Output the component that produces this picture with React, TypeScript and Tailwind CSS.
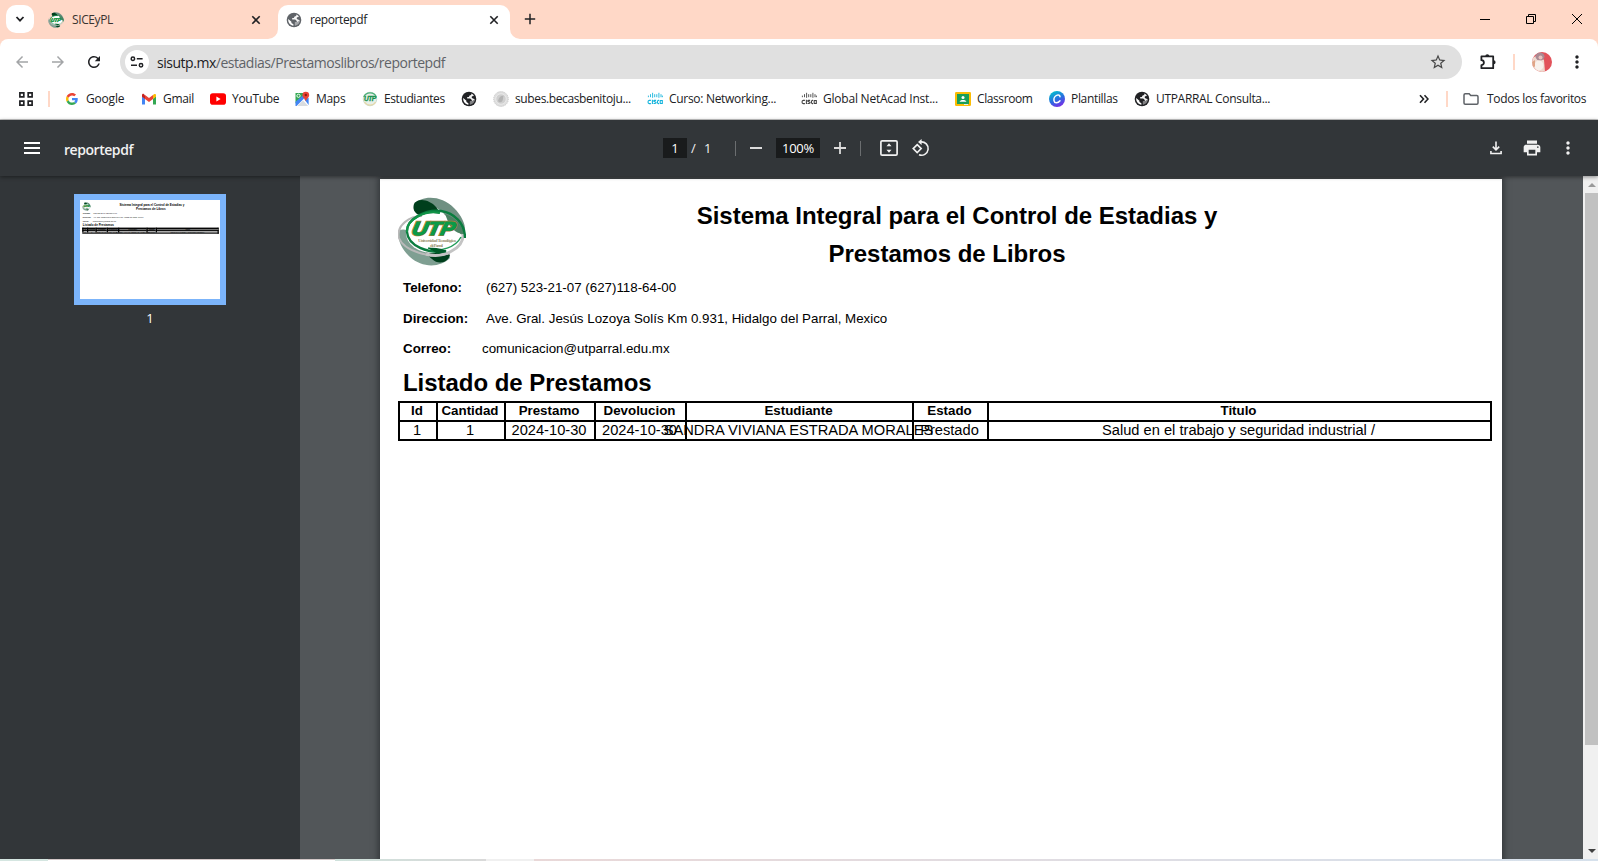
import React from "react";
import {
  MdArrowBack,
  MdArrowForward,
  MdRefresh,
  MdStarBorder,
  MdMoreVert,
  MdPrint,
} from "react-icons/md";

const UI = "font-['Open_Sans','Noto_Sans',sans-serif]";

function UtpLogo({ className, small = false }: { className?: string; small?: boolean }) {
  return (
    <svg viewBox="0 0 68 69" className={className}>
      <path d="M16 7 C24 -2 44 -2 56 11 C66 21 69 32 66 38 C58 36 52 32 50 25 C48 14 34 4 18 11 Z" fill="#6f9082" />
      <path d="M16 7 C20 0 32 3 38 10 C42 15 42 17 40 18 C32 19 24 19 19 17 C15 14 15 10 16 7 Z" fill="#003f1c" />
      <path d="M52 61 C42 71 24 71 12 60 C2 51 -1 40 1 33 C8 31 14 34 16 41 C20 54 34 62 50 56 Z" fill="#7f9f92" />
      <path d="M52 58 C50 66 40 68 34 62 C27 57 26 51 30 51 C38 53 46 54 50 56 Z" fill="#003f1c" />
      <ellipse cx="35" cy="36" rx="27" ry="20" fill="#fff" />
      <path d="M47 17 C58 20 65 30 66 37 C60 37 54 33 51 27 Z" fill="#4c8163" />
      <path d="M52 56 C34 63 6 54 1 41 C-2 28 12 19 24 19" fill="none" stroke="#b9b9b9" strokeWidth="2" />
      <path d="M28 57 C44 62 66 52 65 37" fill="none" stroke="#c4c4c4" strokeWidth="3" />
      <path d="M48 54 C30 57 10 49 9 35 C8 22 28 12 43 14 C56 16 67 26 67 41" fill="none" stroke="#0a7d3f" strokeWidth="2.4" />
      <path d="M9 35 C8 22 28 13 42 16" fill="none" stroke="#109548" strokeWidth="2" />
      <path d="M30 51 C42 56 58 50 63 40" fill="none" stroke="#1f9b57" strokeWidth="1.4" />
      <path d="M30 51 C38 50 44 52 49 54 L40 57 Z" fill="#005a28" />
      <g transform="skewX(-12)">
        <text
          x={small ? 19 : 21}
          y={small ? 42 : 38}
          fontSize={small ? 24 : 19}
          fontWeight="700"
          fontStyle="italic"
          fontFamily="Liberation Sans"
          textLength="43"
          lengthAdjust="spacingAndGlyphs"
          fill="#0a9a48"
          stroke="#b37a35"
          strokeWidth={small ? 1.2 : 2.2}
          paintOrder="stroke"
        >
          UTP
        </text>
        <text
          x={small ? 19 : 21}
          y={small ? 42 : 38}
          fontSize={small ? 24 : 19}
          fontWeight="700"
          fontStyle="italic"
          fontFamily="Liberation Sans"
          textLength="43"
          lengthAdjust="spacingAndGlyphs"
          fill="#0a9a48"
          stroke="#0a9a48"
          strokeWidth="0.9"
          aria-hidden="true"
        >
          UTP
        </text>
      </g>
      {!small && (
        <g fontFamily="Liberation Serif" fontSize="5" fontWeight="700" fill="#9c9473">
          <text x="20" y="45" textLength="38">
            Universidad Tecnológica
          </text>
          <text x="32" y="49.5" textLength="13">
            de Parral
          </text>
        </g>
      )}
    </svg>
  );
}

function Globe({ className }: { className?: string }) {
  return (
    <svg viewBox="0 0 16 16" className={className}>
      <circle cx="8" cy="8" r="7.3" fill="currentColor" />
      <path
        d="M12.9 5 C12.6 4 11.6 3 10.4 2.500 C10.600 3.800 9.800 4.400 8.600 4.500 L7.800 6.100 H6.200 V7.500 H9.200 L10.800 9 V10.300 H8.900 V13.600 C11.600 13.200 13.700 11 13.700 8.200 L12.300 7.400 L10.800 6.900 V5.600 Z"
        fill="#fff"
        opacity="0.95"
      />
      <path d="M2.200 7 L5.400 9.800 L5.400 11 L7.400 12.200 V13.700 C4.400 13.400 2.200 11 2.200 8 Z" fill="#fff" />
      <path d="M13.700 8.200 C13.600 6.900 13.200 5.700 12.400 4.700 L10.900 5.700 L11.200 7 Z M8.900 10.300 H10.800 L13.700 8.200 C13.500 11 11.600 13.200 8.900 13.600 Z" fill="currentColor" opacity="0.55" />
    </svg>
  );
}

function Cisco({ color }: { color: string }) {
  return (
    <svg viewBox="0 0 16 16" className="size-4">
      <path
        d="M1.4 4.6v1.6M3.5 3.2v3M5.6 1.8v5M7.7 3.2v3M9.8 3.2v3M11.9 1.8v5M14 3.2v3M15.4 4.6v1.6"
        stroke={color}
        strokeWidth="0.9"
      />
      <path
        d="M3.9 9.4H2.3Q1 9.6 1 11Q1 12.4 2.3 12.6H3.9M5.4 8.8v4.2M9.1 9.4H7.4Q6.6 9.4 6.7 10.2L9 11.4Q9.2 12.5 8 12.5H6.5M12 9.4H11.4Q10.4 9.6 10.4 11Q10.4 12.4 11.4 12.6H12M13.2 9.5h2.1v3h-2.1z"
        fill="none"
        stroke={color}
        strokeWidth="1.1"
      />
    </svg>
  );
}

const googleIcon = (
  <svg viewBox="0 0 48 48" className="size-3">
    <path fill="#EA4335" d="M24 9.5c3.54 0 6.71 1.22 9.21 3.6l6.85-6.85C35.9 2.38 30.47 0 24 0 14.62 0 6.51 5.38 2.56 13.22l7.98 6.19C12.43 13.72 17.74 9.5 24 9.5z" />
    <path fill="#4285F4" d="M46.98 24.55c0-1.57-.15-3.09-.38-4.55H24v9.02h12.94c-.58 2.96-2.26 5.48-4.78 7.18l7.73 6c4.51-4.18 7.09-10.36 7.09-17.65z" />
    <path fill="#FBBC05" d="M10.53 28.59c-.48-1.45-.76-2.99-.76-4.59s.27-3.14.76-4.59l-7.98-6.19C.92 16.46 0 20.12 0 24c0 3.88.92 7.54 2.56 10.78l7.97-6.19z" />
    <path fill="#34A853" d="M24 48c6.48 0 11.93-2.13 15.89-5.81l-7.73-6c-2.15 1.45-4.92 2.3-8.16 2.3-6.26 0-11.57-4.22-13.47-9.91l-7.98 6.19C6.51 42.62 14.62 48 24 48z" />
  </svg>
);

const gmailIcon = (
  <svg viewBox="0 0 16 16" className="size-4">
    <path fill="#4285f4" d="M1 13.4h3V7.6L1 5.3z" />
    <path fill="#34a853" d="M12 13.4h3V5.3l-3 2.3z" />
    <path fill="#c5221f" d="M1 4.2v1.6L4 8V4.2L3 3.2C2 2.4 1 3.1 1 4.2z" />
    <path fill="#ea4335" d="M4 8V4l4 3 4-3v4l-4 3z" />
    <path fill="#fbbc04" d="M12 8V4l1-.8c1-.7 2 0 2 1v1.6z" />
  </svg>
);

const youtubeIcon = (
  <svg viewBox="0 0 16 16" className="size-4">
    <rect x="0" y="2.3" width="16" height="11.4" rx="2.8" fill="#f00" />
    <path d="M6.4 5.6v4.8L10.6 8z" fill="#fff" />
  </svg>
);

const mapsIcon = (
  <svg viewBox="0 0 16 16" className="size-4">
    <path d="M1.5 2H10v3L1.5 12.5z" fill="#34a853" />
    <path d="M1.5 10.800L9.500 4l2 2L2.600 15H1.5z" fill="#4285f4" />
    <path d="M3.2 15l5.8-5.4L14.2 15z" fill="#d9dce0" />
    <path d="M10.4 8.2l4.2-1.4V14z" fill="#4285f4" />
    <circle cx="4.5" cy="4.8" r="1.6" fill="none" stroke="#fff" strokeWidth="0.9" />
    <path d="M11.8 0.8a3.4 3.4 0 0 0-3.4 3.4c0 2.4 2.6 3 3.4 6.2.8-3.2 3.4-3.8 3.4-6.2A3.4 3.4 0 0 0 11.8.8z" fill="#ea4335" />
    <circle cx="11.8" cy="4" r="1.2" fill="#8e1b12" />
  </svg>
);

const estudiantesIcon = (
  <svg viewBox="0 0 16 16" className="size-4">
    <circle cx="8" cy="8" r="6.8" fill="#e6efe9" stroke="#c3d8cb" strokeWidth="0.8" />
    <path d="M1.8 6C4 0.6 12.4 0.4 14.4 6.4" fill="none" stroke="#4cae78" strokeWidth="1.4" />
    <path d="M2.5 11C5 15 11 15.4 13.6 11" fill="none" stroke="#e6d7a8" strokeWidth="1.2" />
    <text x="2" y="10" fontSize="6.5" fontWeight="700" fontStyle="italic" fontFamily="Liberation Sans" textLength="12" fill="#13904a" stroke="#13904a" strokeWidth="0.3">
      UTP
    </text>
  </svg>
);

const sealIcon = (
  <svg viewBox="0 0 16 16" className="size-4">
    <circle cx="8" cy="8" r="7.4" fill="#dedede" stroke="#c4c4c4" strokeWidth="0.8" strokeDasharray="1.2 0.8" />
    <circle cx="8" cy="8" r="5.2" fill="#cfcfcf" stroke="#efefef" strokeWidth="0.7" />
    <path d="M5 10c1-4 3-5.500 5.500-5.200C9.600 7 10.600 8.400 9 10.600c-1.200 1.200-3 .8-4-.6z" fill="#b4b4b4" />
  </svg>
);

const classroomIcon = (
  <svg viewBox="0 0 16 16" className="size-4">
    <rect x="0" y="1" width="16" height="14" rx="1.2" fill="#fbbc04" />
    <rect x="2" y="3" width="12" height="10" fill="#1a9e58" />
    <circle cx="8" cy="6.4" r="1.5" fill="#fff" />
    <path d="M4.600 10.800c.4-2.400 6.400-2.400 6.800 0z" fill="#fff" />
    <path d="M9 13h4v1H9z" fill="#e8f0ea" />
  </svg>
);

const canvaIcon = (
  <svg viewBox="0 0 16 16" className="size-4">
    <defs>
      <linearGradient id="cv" x1="0.2" y1="0" x2="0.7" y2="1">
        <stop offset="0" stopColor="#00c4cc" />
        <stop offset="0.55" stopColor="#2a6be0" />
        <stop offset="1" stopColor="#7d2ae8" />
      </linearGradient>
    </defs>
    <circle cx="8" cy="8" r="8" fill="url(#cv)" />
    <path d="M11 5.800C11 4.200 9.600 3.600 8.200 4.100C5.800 5 4.600 7.600 5 9.600C5.400 12.400 8.800 12.600 11 9.800" fill="none" stroke="#fff" strokeWidth="1.500" strokeLinecap="round" />
  </svg>
);

const bookmarks: { icon: React.ReactNode; label: string; box: string; track: string }[] = [
  { icon: googleIcon, label: "Google", box: "w-[77px]", track: "tracking-[-0.2px]" },
  { icon: gmailIcon, label: "Gmail", box: "w-[69px]", track: "tracking-[-0.3px]" },
  { icon: youtubeIcon, label: "YouTube", box: "w-[84px]", track: "tracking-[-0.3px]" },
  { icon: mapsIcon, label: "Maps", box: "w-[68px]", track: "tracking-[-0.3px]" },
  { icon: estudiantesIcon, label: "Estudiantes", box: "w-[99px]", track: "tracking-[-0.4px]" },
  { icon: <Globe className="size-4 text-[#202124]" />, label: "", box: "w-8", track: "" },
  { icon: sealIcon, label: "subes.becasbenitoju...", box: "w-[154px]", track: "tracking-[-0.38px]" },
  { icon: <Cisco color="#14b4dc" />, label: "Curso: Networking...", box: "w-[154px]", track: "tracking-[-0.3px]" },
  { icon: <Cisco color="#444" />, label: "Global NetAcad Inst...", box: "w-[154px]", track: "tracking-[-0.22px]" },
  { icon: classroomIcon, label: "Classroom", box: "w-[94px]", track: "tracking-[-0.4px]" },
  { icon: canvaIcon, label: "Plantillas", box: "w-[85px]", track: "tracking-[-0.33px]" },
  { icon: <Globe className="size-4 text-[#202124]" />, label: "UTPARRAL Consulta...", box: "w-[150px]", track: "tracking-[-0.32px]" },
];

function CloseX() {
  return (
    <svg viewBox="0 0 10 10" className="size-[10px]">
      <path d="M1.300 1.300l7.400 7.400M8.700 1.300l-7.400 7.400" stroke="#202124" strokeWidth="1.600" />
    </svg>
  );
}

function TabStrip() {
  return (
    <div className="flex h-[39px] shrink-0 items-start bg-[#ffd8c7]">
      <div className="mt-[5px] ml-[6px] flex size-7 items-center justify-center rounded-[10px] bg-white">
        <svg viewBox="0 0 10 10" className="size-[10px]">
          <path d="M1.500 3l3.500 3.700L8.500 3" fill="none" stroke="#202124" strokeWidth="1.800" />
        </svg>
      </div>
      <div className="mt-[5px] ml-[14px] flex h-[29px] w-[220px] items-center">
        <UtpLogo small className="size-4" />
        <span className="ml-2 flex-1 text-[12px] tracking-[-0.4px] text-[#3a3330]">SICEyPL</span>
        <span className="mr-[7px]">
          <CloseX />
        </span>
      </div>
      <svg viewBox="0 0 10 10" className="size-[10px] self-end">
        <path d="M10 0V10H0A10 10 0 0 0 10 0z" fill="#fff" />
      </svg>
      <div className="mt-[5px] flex h-[34px] w-[232px] items-center rounded-t-[10px] bg-white pb-[5px]">
        <Globe className="ml-2 size-4 text-[#5f6368]" />
        <span className="ml-2 flex-1 text-[12px] tracking-[-0.4px] text-[#202124]">reportepdf</span>
        <span className="mr-[11px]">
          <CloseX />
        </span>
      </div>
      <svg viewBox="0 0 10 10" className="size-[10px] self-end">
        <path d="M0 0V10H10A10 10 0 0 1 0 0z" fill="#fff" />
      </svg>
      <svg viewBox="0 0 12 12" className="mt-[13px] ml-1 size-3">
        <path d="M6 .8v10.400M.8 6h10.400" stroke="#202124" strokeWidth="1.500" />
      </svg>
      <div className="mt-[13px] mr-4 ml-auto flex items-center gap-[36px]">
        <svg viewBox="0 0 10 12" className="h-3 w-[10px]">
          <path d="M0 6.500h10" stroke="#000" />
        </svg>
        <svg viewBox="0 0 10 12" className="h-3 w-[10px]">
          <path d="M.5 3.500h7v7h-7zM2.500 3.500v-2h7v7h-2" fill="none" stroke="#000" />
        </svg>
        <svg viewBox="0 0 10 12" className="h-3 w-[10px]">
          <path d="M0 1l10 10M10 1L0 11" stroke="#000" />
        </svg>
      </div>
    </div>
  );
}

function AddressRow() {
  return (
    <div className="flex h-[46px] items-center">
      <MdArrowBack className="ml-[13px] size-[18px] text-[#a3a5a7]" />
      <MdArrowForward className="ml-[18px] size-[18px] text-[#a3a5a7]" />
      <MdRefresh className="ml-[18px] size-[18px] text-[#202124]" />
      <div className="ml-[17px] flex h-[34px] w-[1342px] items-center rounded-full bg-[#e0e0e0]">
        <div className="ml-[5px] flex size-6 items-center justify-center rounded-full bg-white">
          <svg viewBox="0 0 14 12" className="h-3 w-[14px]" fill="none" stroke="#202124" strokeWidth="1.500">
            <circle cx="2.900" cy="2.700" r="1.700" />
            <path d="M6.800 2.700H12.600M1 9.200h6" />
            <circle cx="11" cy="9.200" r="1.700" />
          </svg>
        </div>
        <span className="ml-2 flex-1 text-[14px] tracking-[-0.47px] text-[#5f6368]">
          <span className="text-[#202124]">sisutp.mx</span>/estadias/Prestamoslibros/reportepdf
        </span>
        <MdStarBorder className="mr-[15px] size-[18px] text-[#474747]" />
      </div>
      <svg viewBox="0 0 18 18" className="ml-[17px] size-[18px]">
        <path d="M2.400 3.400H14.200V15.200H2.400V12.200A2.300 2.300 0 0 0 2.400 7.200Z" fill="none" stroke="#202124" strokeWidth="1.800" strokeLinejoin="round" />
        <path d="M6.300 3.200a2 2 0 0 1 4 0zM14.600 7.300a2 2 0 0 1 0 4z" fill="#202124" />
      </svg>
      <div className="ml-[16px] h-4 w-[2px] bg-[#ffd8c7]" />
      <svg viewBox="0 0 20 20" className="ml-[17px] size-5">
        <defs>
          <clipPath id="av">
            <circle cx="10" cy="10" r="10" />
          </clipPath>
        </defs>
        <g clipPath="url(#av)">
          <rect width="20" height="20" fill="#e2525a" />
          <path d="M0 6L6 3l6 5 1 12H0z" fill="#efd9cf" />
          <ellipse cx="8" cy="4.500" rx="4.500" ry="4" fill="#a98a94" />
          <ellipse cx="8.500" cy="5.500" rx="2" ry="2" fill="#e9c3bd" />
          <ellipse cx="7" cy="13.500" rx="4.500" ry="5" fill="#f8f1ec" />
          <path d="M0 10l3-2v6l-2 3z" fill="#e0a586" />
        </g>
      </svg>
      <MdMoreVert className="ml-[15px] size-5 text-[#202124]" />
    </div>
  );
}

function BookmarksBar() {
  return (
    <div className="flex h-[28px] items-center text-[12px] text-[#202124]">
      <svg viewBox="0 0 14 14" className="ml-[19px] size-[14px]" fill="none" stroke="#202124" strokeWidth="1.700">
        <path d="M.9 .9h3.900v3.900H.9zM9.200 .9h3.900v3.900H9.200zM.9 9.200h3.900v3.900H.9zM9.200 9.200h3.900v3.900H9.200z" />
      </svg>
      <div className="ml-[15px] h-4 w-[2px] bg-[#ffd8c7]" />
      <div className="ml-[14px] flex">
        {bookmarks.map((b, i) => (
          <div key={i} className={`flex shrink-0 items-center ${b.box}`}>
            <span className="flex size-4 items-center justify-center">{b.icon}</span>
            <span className={`ml-[6px] whitespace-nowrap ${b.track}`}>{b.label}</span>
          </div>
        ))}
      </div>
      <div className="ml-auto flex items-center">
        <svg viewBox="0 0 10 10" className="size-[10px]">
          <path d="M1 1.200L4.500 5 1 8.800M5.500 1.200L9 5 5.500 8.800" fill="none" stroke="#202124" strokeWidth="1.600" />
        </svg>
        <div className="ml-[17px] h-4 w-[2px] bg-[#ffd8c7]" />
        <svg viewBox="0 0 16 14" className="ml-[15px] h-[14px] w-4">
          <path d="M2.200 1.800h4l1.500 1.700h6.100q1.200 0 1.200 1.200v6.300q0 1.200-1.200 1.200H2.200Q1 12.200 1 11V3Q1 1.800 2.200 1.800z" fill="none" stroke="#5f6368" strokeWidth="1.500" />
        </svg>
        <div className="ml-2 w-[111px] whitespace-nowrap tracking-[-0.33px]">Todos los favoritos</div>
      </div>
    </div>
  );
}

function PdfToolbar() {
  return (
    <div className="relative z-10 flex h-14 shrink-0 items-center bg-[#323639] text-[#f1f1f1] shadow-[0_1px_4px_rgba(0,0,0,0.45)]">
      <svg viewBox="0 0 16 12" className="ml-6 h-3 w-4">
        <path d="M0 1h16M0 6h16M0 11h16" stroke="#fff" strokeWidth="2" />
      </svg>
      <span className="ml-6 w-[599px] pt-[2px] text-[14px] font-semibold tracking-[-0.45px]">reportepdf</span>
      <span className="flex h-5 w-6 items-center justify-center bg-[#191b1c] pt-px text-[13px] text-white">1</span>
      <span className="ml-1 w-[7px] pt-px text-[13px]">/</span>
      <span className="ml-[6px] w-[31px] pt-px text-[13px]">1</span>
      <span className="h-[15px] w-px bg-[#6b6e70]" />
      <span className="ml-[14px] h-[2px] w-3 bg-[#dcdcdc]" />
      <span className="ml-[14px] flex h-5 w-[44px] items-center justify-center bg-[#191b1c] pt-px text-[13px] tracking-[-0.25px] text-white">
        100%
      </span>
      <svg viewBox="0 0 12 12" className="ml-[14px] size-3">
        <path d="M6 0v12M0 6h12" stroke="#dcdcdc" strokeWidth="1.800" />
      </svg>
      <span className="ml-[14px] h-[15px] w-px bg-[#6b6e70]" />
      <svg viewBox="0 0 18 16" className="ml-[19px] h-4 w-[18px]">
        <rect x=".9" y=".9" width="16.200" height="14.200" rx="1.200" fill="none" stroke="#f1f1f1" strokeWidth="1.700" />
        <path d="M9 3.200l2.500 3h-5zM9 12.800l2.500-3h-5z" fill="#f1f1f1" />
      </svg>
      <svg viewBox="0 0 18 18" className="ml-[14px] size-[18px]">
        <path d="M5.200 5.600L9.200 9.600 5.200 13.600 1.200 9.600z" fill="none" stroke="#f1f1f1" strokeWidth="1.600" />
        <path d="M8.800 2.900A6.700 6.700 0 1 1 7 15.800" fill="none" stroke="#f1f1f1" strokeWidth="1.600" />
        <path d="M9.600 0v6L6 3z" fill="#f1f1f1" />
      </svg>
      <div className="mr-[20px] ml-auto flex items-center">
        <svg viewBox="0 0 12 14" className="h-[14px] w-3">
          <path d="M6 .5v8M2.800 5.600L6 8.900l3.200-3.300M.9 10v2.500h10.200V10" fill="none" stroke="#f1f1f1" strokeWidth="1.600" />
        </svg>
        <MdPrint className="ml-5 size-5" />
        <MdMoreVert className="ml-4 size-5" />
      </div>
    </div>
  );
}

const columns: { head: string; value: string }[] = [
  { head: "Id", value: "1" },
  { head: "Cantidad", value: "1" },
  { head: "Prestamo", value: "2024-10-30" },
  { head: "Devolucion", value: "2024-10-30" },
  { head: "Estudiante", value: "SANDRA VIVIANA ESTRADA MORALES" },
  { head: "Estado", value: "Prestado" },
  { head: "Titulo", value: "Salud en el trabajo y seguridad industrial /" },
];

function ReportPage({ thumbnail = false }: { thumbnail?: boolean }) {
  const edge = thumbnail ? "border-t-10 border-l-10" : "border-t-2 border-l-2";
  return (
    <div className="h-[793px] w-[1122px] bg-white px-[18px] pt-[18px] font-['Liberation_Sans',Arial,sans-serif] text-black">
      <div className="flex h-[76px] items-start">
        <UtpLogo className="h-[69px] w-[68px]" />
        <div className="ml-[91px] w-[800px] text-center text-[24px] leading-[38px] font-bold tracking-[-0.02px]">
          <div>Sistema Integral para el Control de Estadias y</div>
          <div className="-ml-5">Prestamos de Libros</div>
        </div>
      </div>
      <div className="ml-[5px] text-[13.33px] leading-[30.5px]">
        <div className="flex">
          <b className="w-[83px]">Telefono:</b>(627) 523-21-07 (627)118-64-00
        </div>
        <div className="flex">
          <b className="w-[83px]">Direccion:</b>Ave. Gral. Jesús Lozoya Solís Km 0.931, Hidalgo del Parral, Mexico
        </div>
        <div className="flex">
          <b className="w-[79px]">Correo:</b>comunicacion@utparral.edu.mx
        </div>
      </div>
      <h2 className="ml-[5px] h-[36.5px] text-[24px] leading-[36px] font-bold tracking-[-0.04px]">Listado de Prestamos</h2>
      <div
        className={`grid w-[1094px] grid-cols-[38px_68px_90px_91px_227px_75px_503px] border-black ${
          thumbnail ? "border-r-10 border-b-10" : "border-r-2 border-b-2"
        }`}
      >
        {columns.map((c) => (
          <div
            key={c.head}
            className={`flex h-[19px] justify-center border-black text-[13.33px] leading-[15px] font-bold whitespace-nowrap ${edge} ${
              thumbnail ? "bg-neutral-500" : "pr-[2px]"
            }`}
          >
            {c.head}
          </div>
        ))}
        {columns.map((c) => (
          <div
            key={c.head}
            className={`flex h-[19px] justify-center border-black pr-[2px] text-[14.67px] leading-[16px] whitespace-nowrap ${edge}`}
          >
            {c.value}
          </div>
        ))}
      </div>
    </div>
  );
}

export default function App() {
  return (
    <div className={`flex h-[861px] w-[1598px] flex-col overflow-hidden bg-white ${UI}`}>
      <TabStrip />
      <div className="h-[81px] shrink-0 bg-[#ffd8c7]">
        <div className="h-[81px] rounded-t-lg border-b border-[#c8c8c8] bg-white">
          <AddressRow />
          <BookmarksBar />
        </div>
      </div>
      <PdfToolbar />
      <div className="flex h-[683px] shrink-0 bg-[#525659]">
        <div className="flex w-[300px] flex-col items-center bg-[#323639] pt-[18px]">
          <div className="h-[111px] w-[152px] border-6 border-[#7bb4fa] bg-white">
            <div className="h-[99px] w-[140px] overflow-hidden">
              <div className="origin-top-left scale-[0.1248]">
                <ReportPage thumbnail />
              </div>
            </div>
          </div>
          <div className="mt-1 text-[13px] text-white">1</div>
        </div>
        <div className="flex-1 overflow-hidden pt-[3px] pl-20">
          <div className="w-[1122px] shadow-[0_0_6px_2px_rgba(30,33,36,0.6)]">
            <ReportPage />
          </div>
        </div>
        <div className="flex w-[15px] flex-col items-end bg-[#f0f0f0]">
          <div className="flex h-[17px] w-full items-center justify-center pl-[2px]">
            <svg viewBox="0 0 8 4" className="h-1 w-2">
              <path d="M4 0L8 4H0z" fill="#9a9a9a" />
            </svg>
          </div>
          <div className="h-[552px] w-[13px] bg-[#c1c1c1]" />
          <div className="mt-auto flex h-[17px] w-full items-center justify-center pl-[2px]">
            <svg viewBox="0 0 8 4" className="h-1 w-2">
              <path d="M4 4L8 0H0z" fill="#404040" />
            </svg>
          </div>
        </div>
      </div>
      <div className="flex h-[2px] shrink-0">
        <div className="w-12 bg-[#d5e6e1]" />
        <div className="w-[287px] border-t border-[#d3c8c8] bg-white" />
        <div className="w-[151px] bg-linear-to-r from-[#cfe2dc] to-[#d9d9d9]" />
        <div className="w-12 bg-[#f0f0f0]" />
        <div className="flex-1 bg-linear-to-r from-[#e9d8d8] to-[#d6e1ec]" />
      </div>
    </div>
  );
}
